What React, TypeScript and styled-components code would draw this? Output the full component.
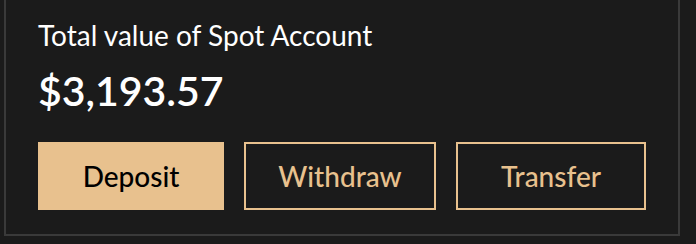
import React from "react";
import styled, { createGlobalStyle } from "styled-components";

const Global = createGlobalStyle`
  html, body { margin: 0; padding: 0; background: #1b1b1b; }
  body { font-family: Lato, "Noto Sans", sans-serif; }
`;

const Page = styled.div`
  padding: 0 16px 8px 4px;
  width: 696px;
  height: 244px;
  box-sizing: border-box;
`;

const Card = styled.section`
  width: 676px;
  height: 236px;
  box-sizing: border-box;
  border: 2px solid #3a3a3a;
  border-top: none;
  background: #1b1b1b;
  padding: 18px 0 0 32px;
  display: flex;
  flex-direction: column;
`;

const Label = styled.div`
  color: #ffffff;
  font-size: 28px;
  line-height: 34px;
  font-weight: 400;
`;

const Amount = styled.div`
  margin-top: 15px;
  color: #ffffff;
  font-size: 41px;
  line-height: 48px;
  font-weight: 600;
`;

const Actions = styled.div`
  margin-top: 27px;
  display: flex;
  gap: 20px;
`;

const Button = styled.button<{ $primary?: boolean; $w: number }>`
  width: ${(p) => p.$w}px;
  height: 68px;
  box-sizing: border-box;
  border: 2px solid #e8c18e;
  background: ${(p) => (p.$primary ? "#e8c18e" : "transparent")};
  color: ${(p) => (p.$primary ? "#000000" : "#e8c18e")};
  font-family: Lato, "Noto Sans", sans-serif;
  font-size: 28px;
  font-weight: 500;
  display: flex;
  align-items: center;
  justify-content: center;
  padding: 0;
  cursor: pointer;
`;

export default function App() {
  return (
    <>
      <Global />
      <Page>
        <Card>
          <Label>Total value of Spot Account</Label>
          <Amount>$3,193.57</Amount>
          <Actions>
            <Button $primary $w={186}>Deposit</Button>
            <Button $w={192}>Withdraw</Button>
            <Button $w={190}>Transfer</Button>
          </Actions>
        </Card>
      </Page>
    </>
  );
}
